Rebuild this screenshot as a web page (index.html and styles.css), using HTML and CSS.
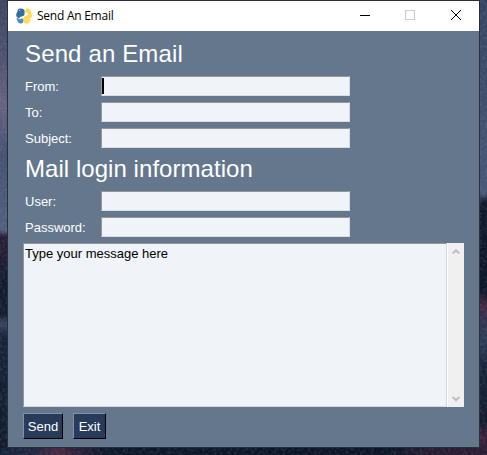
FILE: index.html
```html
<!DOCTYPE html>
<html lang="en">
<head>
<meta charset="utf-8">
<title>Send An Email</title>
<link rel="stylesheet" href="styles.css">
</head>
<body>
<svg class="wallpaper" width="487" height="455" viewBox="0 0 487 455" aria-hidden="true">
  <defs>
    <linearGradient id="left-land" x1="0" y1="0" x2="0" y2="455" gradientUnits="userSpaceOnUse">
      <stop offset="0" stop-color="#3d4661"/><stop offset=".12" stop-color="#4c506e"/><stop offset=".23" stop-color="#666280"/><stop offset=".34" stop-color="#44516f"/><stop offset=".505" stop-color="#535f7e"/>
      <stop offset=".52" stop-color="#2c1c35"/><stop offset=".58" stop-color="#1b1d33"/><stop offset=".62" stop-color="#111a2d"/><stop offset=".69" stop-color="#121c30"/><stop offset=".71" stop-color="#36435d"/><stop offset=".74" stop-color="#152238"/><stop offset="1" stop-color="#101b2e"/>
    </linearGradient>
    <linearGradient id="right-land" x1="0" y1="0" x2="0" y2="455" gradientUnits="userSpaceOnUse">
      <stop offset="0" stop-color="#354461"/><stop offset=".425" stop-color="#475775"/><stop offset=".445" stop-color="#10182c"/><stop offset=".64" stop-color="#0d1629"/><stop offset=".67" stop-color="#422841"/><stop offset=".7" stop-color="#33304b"/><stop offset=".75" stop-color="#2d3b56"/><stop offset=".81" stop-color="#172338"/><stop offset=".93" stop-color="#151a2d"/><stop offset=".96" stop-color="#3b213a"/><stop offset="1" stop-color="#211a30"/>
    </linearGradient>
    <linearGradient id="ground">
      <stop offset="0" stop-color="#142238"/><stop offset=".07" stop-color="#222640"/><stop offset=".12" stop-color="#4a2943"/><stop offset=".16" stop-color="#292039"/><stop offset=".22" stop-color="#0d182a"/><stop offset=".8" stop-color="#0c1527"/><stop offset=".87" stop-color="#251b31"/><stop offset="1" stop-color="#2c1d34"/>
    </linearGradient>
    <filter id="grain" x="0" y="0" width="100%" height="100%">
      <feTurbulence type="fractalNoise" baseFrequency=".35" numOctaves="3" seed="4"/>
      <feColorMatrix values="0 0 0 0 .5  0 0 0 0 .58  0 0 0 0 .72  1 0 0 0 -.42"/>
    </filter>
  </defs>
  <rect width="487" height="455" fill="#272d3c"/>
  <path fill="url(#left-land)" d="M0 0h7v448H0z"/>
  <path fill="url(#right-land)" d="M480 0h7v455h-7z"/>
  <path fill="url(#ground)" d="M0 448h487v7H0z"/>
  <rect width="487" height="455" filter="url(#grain)" opacity=".35"/>
</svg>
<main class="window">
  <header class="titlebar">
    <svg class="app-icon" width="16" height="16" viewBox="0 0 16 16">
      <path fill="#326d9f" d="M4 .5C6 .1 8.400.8 8.600 3v3c-.2 1.800-1.400 2.200-3.200 2.600C3.900 9 3.500 9.500 3.400 10.300L1 9.300C-.1 8 0 5 1.200 4.300L1.500 2.500C2 1.200 2.700.7 4 .5z"/>
      <path fill="#4b91c4" d="M.8 9.700l2.300 1.100c.8.600 2.400-.1 4.400-.2v3c-.3 1.700-2.100 2.400-4 1.600-1.500-.5-2-1.200-1.700-2.200C.8 12.200.3 11 .8 9.700z"/>
      <path fill="#ffda4b" d="M9.300 3c0-1.800 1-2.700 2.700-2.500 2 .2 2.500 1.600 2.300 3.100 1.600 1 2.200 4.300.8 6.100l-1.300 1.100c1.200 2.300-.1 4.300-2.200 4.800-2.200.5-3.900-.6-4.100-2.400v-3C7.700 8.600 9.200 8.300 10.700 7.700c1.400-.5 1.700-1.400 1.200-2.700l-2.600-.6z"/>
      <circle cx="3.600" cy="2.500" r=".5" fill="#fff"/><circle cx="12" cy="13.300" r=".5" fill="#fff"/>
      <path d="M9.500 11l3.500-1" stroke="#fff1b8" stroke-width=".6"/>
    </svg>
    <h1 class="window-title">Send An Email</h1>
    <svg class="controls" width="138" height="30" viewBox="0 0 138 30" fill="none" shape-rendering="crispEdges">
      <path d="M19 14.500h10" stroke="#000"/>
      <rect x="64.500" y="9.500" width="9" height="9" stroke="#ccc"/>
      <path d="M110 9l10 10m0-10l-10 10" stroke="#000" stroke-width="1" shape-rendering="auto"/>
    </svg>
  </header>
  <form class="content">
    <h2 class="heading heading-email">Send an Email</h2>
    <label class="row"><span class="label">From:</span><span class="field"><span class="caret"></span></span></label>
    <label class="row"><span class="label">To:</span><span class="field"></span></label>
    <label class="row"><span class="label">Subject:</span><span class="field"></span></label>
    <h2 class="heading">Mail login information</h2>
    <label class="row"><span class="label">User:</span><span class="field"></span></label>
    <label class="row"><span class="label">Password:</span><span class="field"></span></label>
    <div class="message">
      <div class="message-text"><span class="message-copy">Type your message here</span></div>
      <div class="scrollbar">
        <svg width="8" height="7" viewBox="0 0 8 7"><path d="M.7 5.500L4 2.200 7.300 5.500" fill="none" stroke="#bfbfbf" stroke-width="2.200"/></svg>
        <svg width="8" height="7" viewBox="0 0 8 7"><path d="M.7 1L4 4.300 7.300 1" fill="none" stroke="#bfbfbf" stroke-width="2.200"/></svg>
      </div>
    </div>
    <div class="actions">
      <button class="button send" type="button">Send</button>
      <button class="button exit" type="button">Exit</button>
    </div>
  </form>
</main>
</body>
</html>
```
FILE: styles.css
```css
* { box-sizing: border-box; }
body {
  margin: 0;
  width: 487px;
  height: 455px;
  padding: 1px 8px 8px;
  overflow: hidden;
  background: #101a2e;
  font-family: "Liberation Sans", Arial, sans-serif;
}
.wallpaper { position: absolute; left: 0; top: 0; z-index: -1; }
.window {
  width: 471px;
  height: 446px;
  background: #64778d;
  box-shadow: 0 0 0 1px #292e38;
}
.titlebar {
  display: flex;
  align-items: center;
  height: 30px;
  padding-left: 8px;
  background: #fff;
}
.app-icon { margin-right: 5px; }
.window-title {
  margin: 0;
  color: #000;
  font: 12px/16px "Open Sans", "Noto Sans", sans-serif;
  letter-spacing: -.25px;
  white-space: nowrap;
}
.controls { margin-left: auto; }
.content { padding: 5px 15px 0; }
.heading {
  margin: 0;
  height: 37px;
  padding-left: 2px;
  color: #fff;
  font-size: 24px;
  font-weight: 400;
  line-height: 36px;
  letter-spacing: .05px;
  white-space: nowrap;
}
.heading-email { letter-spacing: .14px; }
.row { display: flex; height: 26px; padding-top: 3px; }
.label {
  width: 78px;
  padding-left: 2px;
  color: #fff;
  font-size: 13px;
  line-height: 21px;
}
.field {
  width: 249px;
  height: 20px;
  padding: 1px 0;
  background: #f0f3f7;
  border: 1px solid;
  border-color: #969696 #d9dde1 #d9dde1 #969696;
}
.caret { display: block; width: 2px; height: 16px; background: #000; }
.message { display: flex; width: 441px; height: 164px; margin-top: 3px; }
.message-text {
  width: 424px;
  padding-left: 1px;
  color: #000;
  background: #f0f3f7;
  border: 1px solid;
  border-color: #969696 #d4d8dc #d4d8dc #969696;
  font-size: 13px;
  line-height: 20px;
}
.scrollbar {
  display: flex;
  flex: 1;
  flex-direction: column;
  align-items: center;
  justify-content: space-between;
  padding: 5px 0 4px;
  background: #f0f0f0;
  border-left: 1px solid #fff;
}
.actions { display: flex; gap: 10px; margin-top: 6px; }
.button {
  height: 26px;
  padding: 0;
  color: #fff;
  background: #283b5b;
  border: 1px solid;
  border-color: #8290a5 #000 #000 #8290a5;
  border-radius: 0;
  font: 13px/23px "Liberation Sans", Arial, sans-serif;
}
.send { width: 40px; }
.exit { width: 33px; }
```
